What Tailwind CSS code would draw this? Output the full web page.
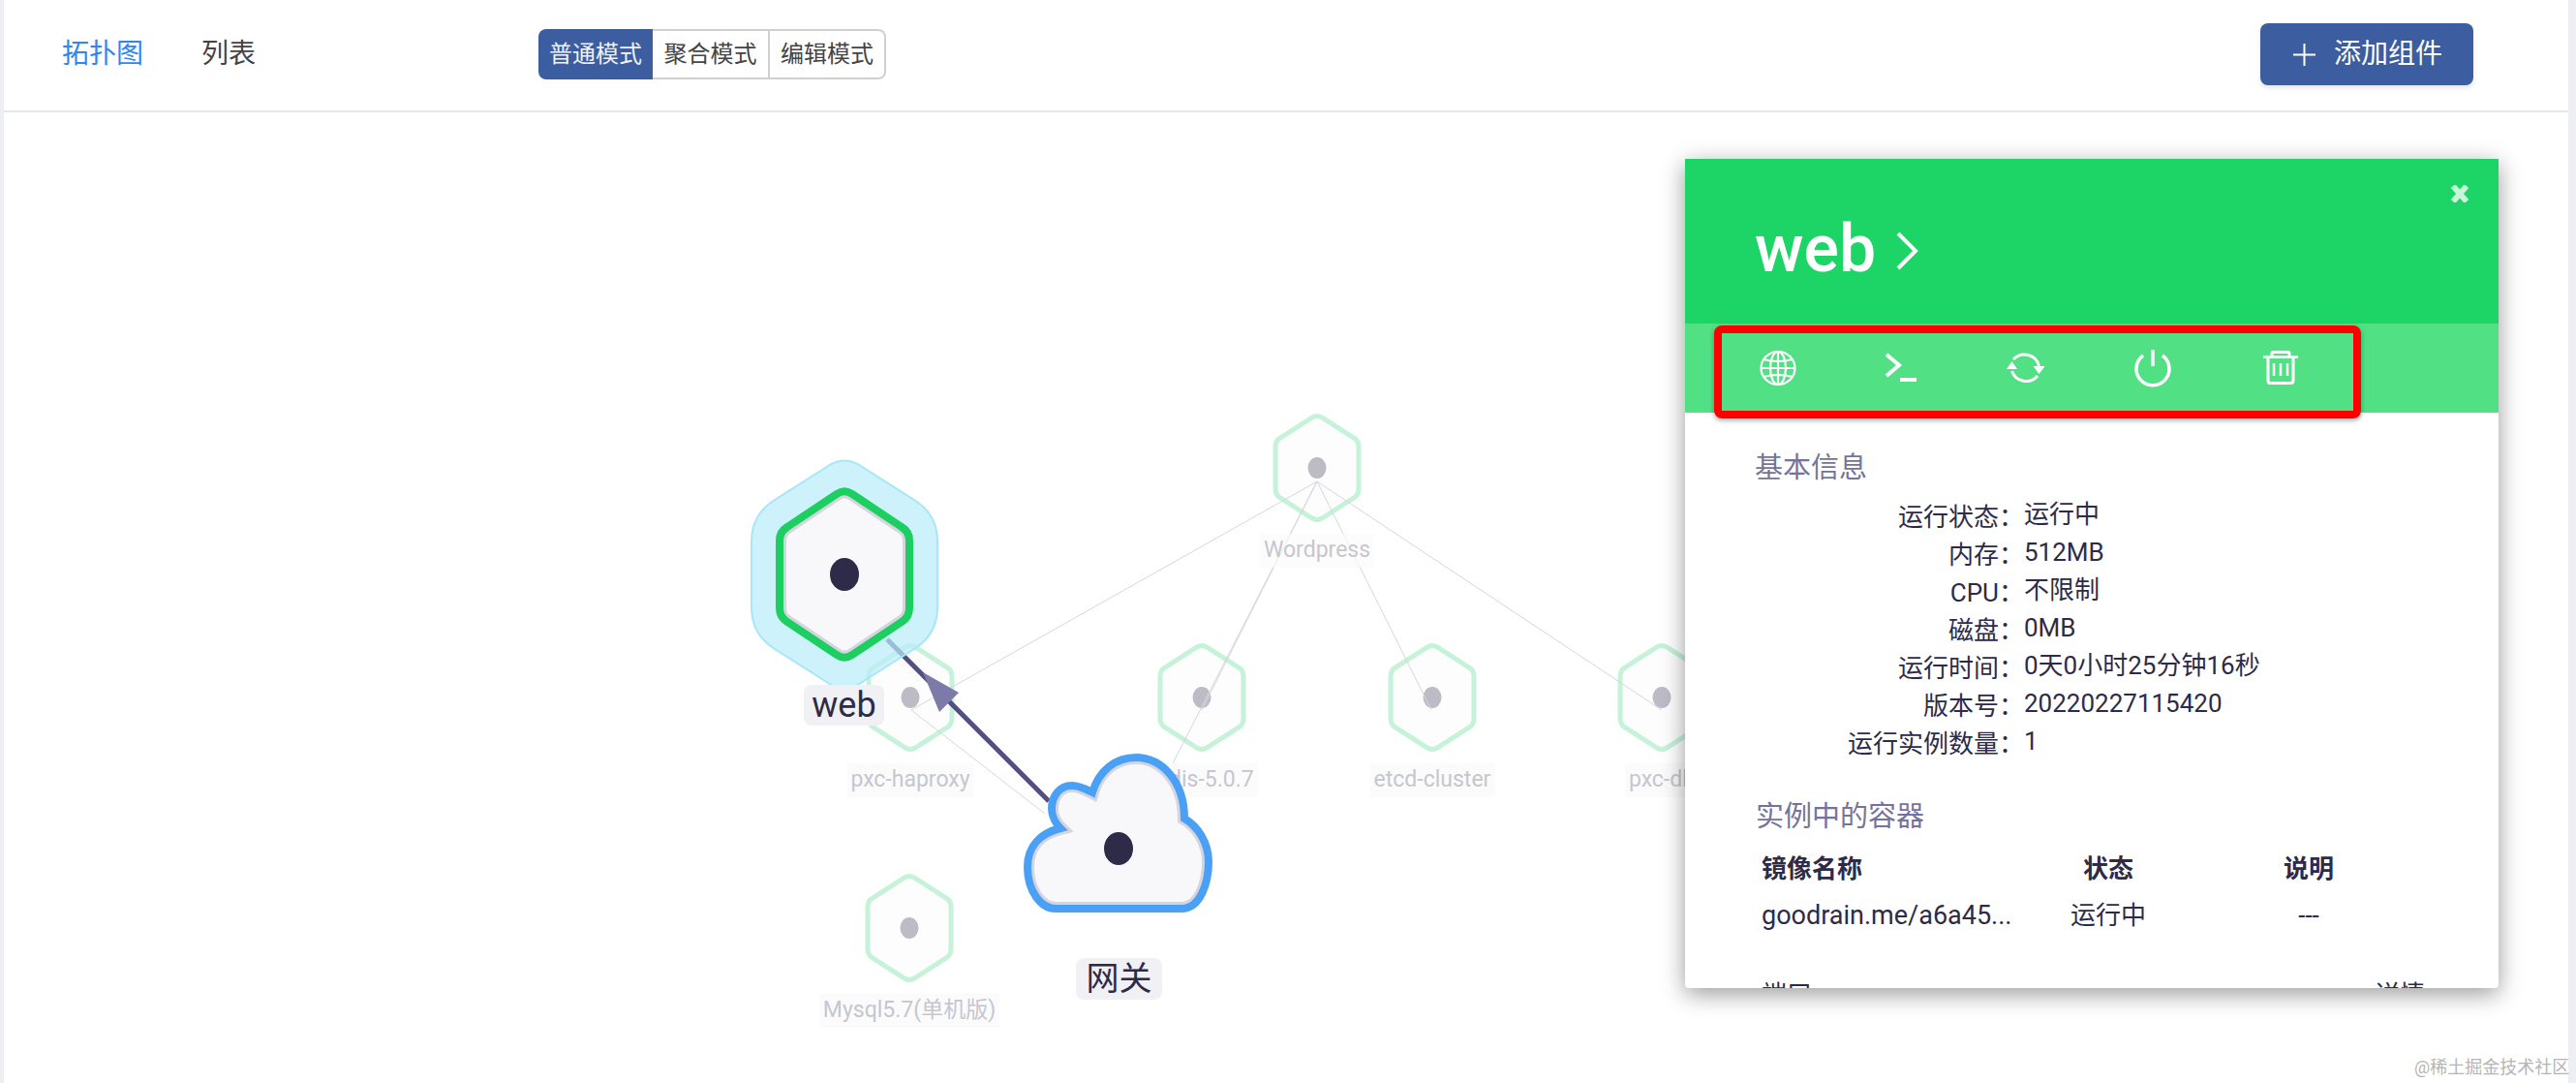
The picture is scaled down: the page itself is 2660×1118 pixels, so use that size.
<!DOCTYPE html>
<html lang="zh-CN">
<head>
    <meta charset="UTF-8">
    <title>拓扑图</title>
    <script src="https://cdn.jsdelivr.net/npm/@tailwindcss/browser@4"></script>
</head>
<body class="bg-white">
<div class="relative flex w-[2660px] h-[1118px] overflow-hidden bg-white text-[#2d2b47] font-['Roboto','Noto_Sans_CJK_SC',sans-serif]">
    <div class="w-[4px] bg-[#eeeff3]"></div>

    <main class="flex-1">
        <!-- 顶部栏 -->
        <header class="flex items-center h-[116px] pb-[2px] pl-[60px] pr-[98px] border-b-2 border-[#e4e5e9]">
            <a class="text-[28px] text-[#2f86f0]">拓扑图</a>
            <a class="ml-[60px] text-[28px] text-[#444]">列表</a>
            <div class="flex ml-[292px] h-[52px] text-[24px] text-[#444]">
                <span class="flex items-center justify-center w-[118px] rounded-l-lg bg-[#3c5da0] text-[#eef1f8]">普通模式</span>
                <span class="flex items-center justify-center w-[121px] border-y-2 border-r-2 border-[#d0d0d0]">聚合模式</span>
                <span class="flex items-center justify-center w-[120px] border-y-2 border-r-2 border-[#d0d0d0] rounded-r-lg">编辑模式</span>
            </div>
            <button class="flex items-center ml-auto h-[64px] w-[220px] pl-[34px] rounded-lg bg-[#3c5da0] text-[28px] text-white shadow-[0_3px_4px_rgba(60,93,160,0.15)]">
                <svg class="w-[23px] h-[23px] mr-[19px]" viewBox="0 0 23 23" fill="none" stroke="#fff" stroke-width="2"><path d="M11.5 0V23M0 11.5H23"/></svg>
                添加组件
            </button>
        </header>
    </main>

    <div class="w-[8px] bg-[#eeeff3]"></div>

    <!-- 拓扑：淡化节点 -->
    <svg class="absolute left-0 top-0" width="2660" height="1118" viewBox="0 0 2660 1118" fill="none">
        <defs>
            <path id="hexSmall" d="M-5,-52 Q0,-55 5,-52 L38,-31 Q43,-28 43,-22 L43,22 Q43,28 38,31 L5,52 Q0,55 -5,52 L-38,31 Q-43,28 -43,22 L-43,-22 Q-43,-28 -38,-31Z"/>
        </defs>
        <g fill="#fdfdfe" stroke="#c6f2d9" stroke-width="5">
            <use href="#hexSmall" transform="translate(1360,483)"/>
            <use href="#hexSmall" transform="translate(940,720)"/>
            <use href="#hexSmall" transform="translate(1241,720)"/>
            <use href="#hexSmall" transform="translate(1479,720)"/>
            <use href="#hexSmall" transform="translate(1716,720)"/>
            <use href="#hexSmall" transform="translate(939,958)"/>
        </g>
        <g fill="#bdbcc6">
            <ellipse cx="1360" cy="483" rx="9.5" ry="11"/>
            <ellipse cx="940" cy="720" rx="9.5" ry="11"/>
            <ellipse cx="1241" cy="720" rx="9.5" ry="11"/>
            <ellipse cx="1479" cy="720" rx="9.5" ry="11"/>
            <ellipse cx="1716" cy="720" rx="9.5" ry="11"/>
            <ellipse cx="939" cy="958" rx="9.5" ry="11"/>
        </g>
        <g stroke="#d6d6db" stroke-width="1">
            <path d="M1360,497 L941,733 L1079,840"/>
            <path d="M1360,497 L1241,733"/>
            <path d="M1360,497 L1209,792"/>
            <path d="M1360,497 L1478,733"/>
            <path d="M1360,497 L1716,733"/>
        </g>
    </svg>

    <span class="absolute left-[1360px] top-[568px] -translate-x-1/2 -translate-y-1/2 px-1 bg-[#fbfbfc]/70 text-[23px] text-[#c6c6ce]">Wordpress</span>
    <span class="absolute left-[940px] top-[805px] -translate-x-1/2 -translate-y-1/2 px-1 bg-[#fbfbfc] text-[23px] text-[#c6c6ce]">pxc-haproxy</span>
    <span class="absolute left-[1241px] top-[805px] -translate-x-1/2 -translate-y-1/2 px-1 bg-[#fbfbfc] text-[23px] text-[#c6c6ce]">redis-5.0.7</span>
    <span class="absolute left-[1479px] top-[805px] -translate-x-1/2 -translate-y-1/2 px-1 bg-[#fbfbfc] text-[23px] text-[#c6c6ce]">etcd-cluster</span>
    <span class="absolute left-[1716px] top-[805px] -translate-x-1/2 -translate-y-1/2 px-1 bg-[#fbfbfc] text-[23px] text-[#c6c6ce]">pxc-db</span>
    <span class="absolute left-[939px] top-[1043px] -translate-x-1/2 -translate-y-1/2 px-1 bg-[#fbfbfc] text-[23px] text-[#c6c6ce] whitespace-nowrap">Mysql5.7(单机版)</span>

    <!-- 拓扑：选中节点和网关 -->
    <svg class="absolute left-0 top-0" width="2660" height="1118" viewBox="0 0 2660 1118" fill="none">
        <defs>
            <path id="hexWeb" d="M-8,-83 Q0,-88.5 8,-83 L59,-49 Q67,-44 67,-35 L67,35 Q67,44 59,49 L8,83 Q0,88.5 -8,83 L-59,49 Q-67,44 -67,35 L-67,-35 Q-67,-44 -59,-49Z"/>
            <path id="cloud" d="M1090,938 L1220,938 C1240,938 1248,910 1248,890 C1248,870 1237,853 1223,845 C1223,807 1200,782 1173,782 C1152,782 1135,795 1128,818 C1122,815 1115,811 1107,811 C1093,811 1086,823 1086,835 C1086,842 1090,850 1095,855 C1075,860 1061,873 1061,895 C1061,920 1075,938 1090,938Z"/>
            <clipPath id="cloudClip"><use href="#cloud"/></clipPath>
            <clipPath id="hexClip"><use href="#hexWeb"/></clipPath>
        </defs>

        <path d="M1083,827 L916,660" stroke="#524f82" stroke-width="5"/>
        <polygon points="953,694 990,715 970,735" fill="#7d7aaa"/>

        <g transform="translate(872,593)">
            <path d="M-20,-110 Q0,-125 20,-110 L72,-77 Q96,-62 96,-34 L96,34 Q96,62 72,77 L20,110 Q0,125 -20,110 L-72,77 Q-96,62 -96,34 L-96,-34 Q-96,-62 -72,-77Z" fill="#b9ecfa" fill-opacity="0.7" stroke="#a9e5f8" stroke-width="2"/>
            <use href="#hexWeb" fill="#f8f8fb"/>
            <use href="#hexWeb" stroke="#d5d5e0" stroke-width="14" clip-path="url(#hexClip)"/>
            <use href="#hexWeb" stroke="#1ccf60" stroke-width="8"/>
            <ellipse cx="0" cy="0" rx="15" ry="17" fill="#2d2b47"/>
        </g>

        <use href="#cloud" fill="#f8f8fb"/>
        <use href="#cloud" stroke="#d5d5e0" stroke-width="14" clip-path="url(#cloudClip)"/>
        <use href="#cloud" stroke="#4aa0f5" stroke-width="8"/>
        <ellipse cx="1155" cy="876" rx="15" ry="17" fill="#2d2b47"/>
    </svg>

    <span class="absolute left-[830px] top-[707px] flex items-center justify-center w-[83px] h-[42px] rounded-lg bg-[#f1f1f5] text-[36px]">web</span>
    <span class="absolute left-[1111px] top-[989px] flex items-center justify-center w-[89px] h-[43px] rounded-lg bg-[#f1f1f5] text-[34px]">网关</span>

    <!-- 组件详情面板 -->
    <aside class="absolute left-[1740px] top-[164px] w-[840px] h-[856px] rounded-b bg-white shadow-[0_6px_24px_rgba(0,0,0,0.4)]">
        <div class="h-full overflow-hidden rounded-b">
            <div class="relative flex items-center h-[170px] pl-[72px] pt-[16px] bg-[#1dd566] text-white">
                <span class="text-[68px] font-medium leading-none">web</span>
                <svg class="w-[24px] h-[40px] ml-[20px] mt-[4px]" viewBox="0 0 24 40" fill="none" stroke="#fff" stroke-width="4"><path d="M3,2 L21,20 L3,38"/></svg>
                <svg class="absolute right-[30px] top-[27px] w-[20px] h-[18px]" viewBox="0 0 20 18" fill="none" stroke="#c9f5d9" stroke-width="6"><path d="M3,1 L17,17 M17,1 L3,17"/></svg>
            </div>

            <div class="flex items-center h-[92px] pl-[76px] bg-[#52e084]">
                <svg class="w-[40px] h-[40px]" viewBox="0 0 40 40" fill="none" stroke="#fff" stroke-width="2.2">
                    <ellipse cx="20" cy="20" rx="17.5" ry="17"/>
                    <ellipse cx="20" cy="20" rx="8" ry="17"/>
                    <path d="M20,3V37M2.5,20H37.5M5,11Q20,15 35,11M5,29Q20,25 35,29"/>
                </svg>
                <svg class="w-[40px] h-[40px] ml-[87px]" viewBox="0 0 40 40" fill="none" stroke="#fff" stroke-width="4">
                    <path d="M5,6 L18,17 L5,28"/>
                    <path d="M19,32H36"/>
                </svg>
                <svg class="w-[40px] h-[40px] ml-[88px]" viewBox="0 0 40 40" fill="none" stroke="#fff" stroke-width="3">
                    <path d="M8,11 A15.5,15.5 0 0 1 34.5,18"/>
                    <path d="M33,28 A15.5,15.5 0 0 1 6.5,23"/>
                    <polygon points="28.5,18 40.5,18 34.5,26" fill="#fff" stroke="none"/>
                    <polygon points="1,21 12,21 6.5,13" fill="#fff" stroke="none"/>
                </svg>
                <svg class="w-[40px] h-[40px] ml-[92px]" viewBox="0 0 40 40" fill="none" stroke="#fff" stroke-width="3.5">
                    <path d="M10,7 A17,17 0 1 0 30,7"/>
                    <path d="M20,1V18"/>
                </svg>
                <svg class="w-[40px] h-[40px] ml-[92px]" viewBox="0 0 40 40" fill="none" stroke="#fff" stroke-width="3">
                    <path d="M2,8.5H38"/>
                    <path d="M11,8 V5 Q11,3.5 12.5,3.5 H27.5 Q29,3.5 29,5 V8"/>
                    <path d="M7,9 V33 Q7,35.5 9.5,35.5 H30.5 Q33,35.5 33,33 V9"/>
                    <path d="M13,15V28M20,15V28M27,15V28" stroke-width="2.5"/>
                </svg>
            </div>

            <section class="pt-[37px]">
                <h3 class="ml-[72px] text-[29px] leading-[40px] text-[#75739c]">基本信息</h3>
                <dl class="mt-[9px] grid grid-cols-[350px_1fr] auto-rows-[39px] text-[26px] leading-[39px]">
                    <dt class="text-right">运行状态<span class="font-['Noto_Sans_CJK_TC']">：</span></dt><dd>运行中</dd>
                    <dt class="text-right">内存<span class="font-['Noto_Sans_CJK_TC']">：</span></dt><dd>512MB</dd>
                    <dt class="text-right">CPU<span class="font-['Noto_Sans_CJK_TC']">：</span></dt><dd>不限制</dd>
                    <dt class="text-right">磁盘<span class="font-['Noto_Sans_CJK_TC']">：</span></dt><dd>0MB</dd>
                    <dt class="text-right">运行时间<span class="font-['Noto_Sans_CJK_TC']">：</span></dt><dd>0天0小时25分钟16秒</dd>
                    <dt class="text-right">版本号<span class="font-['Noto_Sans_CJK_TC']">：</span></dt><dd>20220227115420</dd>
                    <dt class="text-right">运行实例数量<span class="font-['Noto_Sans_CJK_TC']">：</span></dt><dd>1</dd>
                </dl>
            </section>

            <section class="mt-[38px]">
                <h3 class="ml-[73px] text-[29px] leading-[40px] text-[#75739c]">实例中的容器</h3>
                <div class="mt-[10px] ml-[79px] grid grid-cols-[256px_204px_210px] text-[26px] leading-[48px]">
                    <span class="font-bold">镜像名称</span><span class="font-bold text-center">状态</span><span class="font-bold text-center">说明</span>
                    <span class="whitespace-nowrap text-[27px]">goodrain.me/a6a45...</span><span class="text-center">运行中</span><span class="text-center">---</span>
                </div>
            </section>

            <div class="flex mt-[39px] ml-[79px] text-[26px] leading-[39px]">
                <span>端口</span>
                <span class="ml-[581px]">详情</span>
            </div>
        </div>

        <!-- 红框标注 -->
        <div class="absolute left-[30px] top-[172px] w-[668px] h-[96px] rounded-lg border-8 border-[#ff0000] shadow-[0_2px_5px_rgba(0,0,0,0.35)]"></div>
    </aside>

    <span class="absolute left-[2493px] top-[1090px] text-[18px] leading-[24px] text-[#b5b5b5] whitespace-nowrap">@稀土掘金技术社区</span>
</div>
</body>
</html>
